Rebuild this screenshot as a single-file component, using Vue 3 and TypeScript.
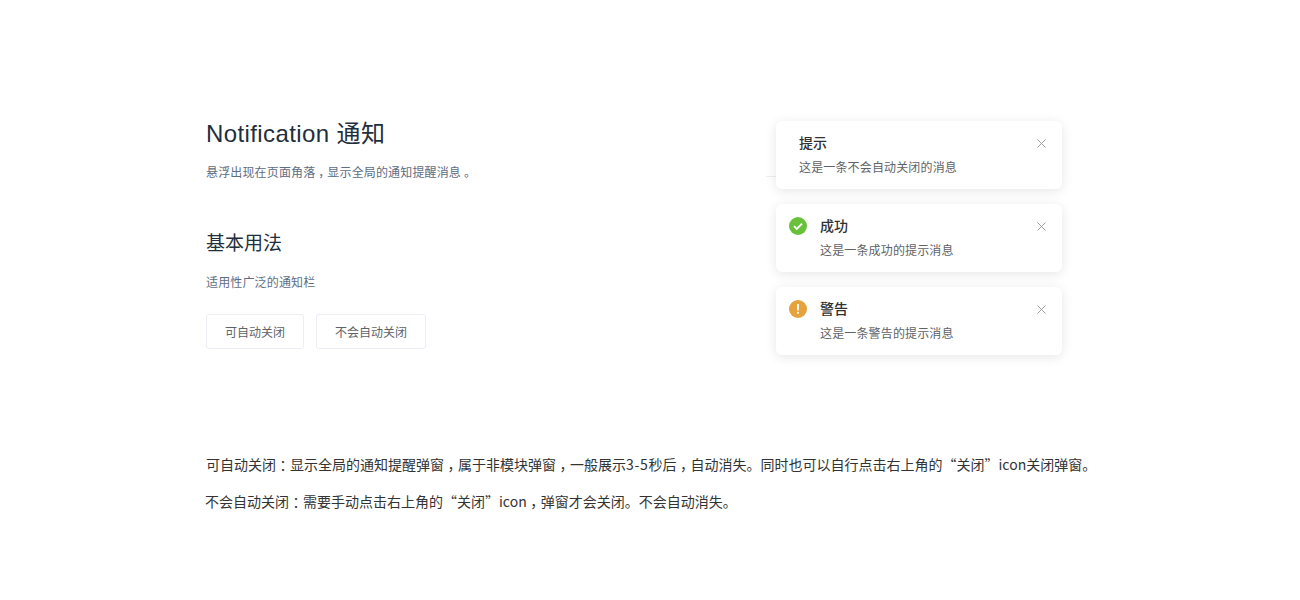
<script setup lang="ts">
interface Note { title: string; body: string; kind?: 'success' | 'warning' }
const notes: Note[] = [
  { title: '提示', body: '这是一条不会自动关闭的消息' },
  { title: '成功', body: '这是一条成功的提示消息', kind: 'success' },
  { title: '警告', body: '这是一条警告的提示消息', kind: 'warning' },
]
</script>

<template>
  <div class="page">
    <div class="top">
      <div class="left">
        <h1>Notification 通知</h1>
        <p class="desc">悬浮出现在页面角落<span class="p">，</span>显示全局的通知提醒消息<span class="p">。</span></p>
        <h2>基本用法</h2>
        <p class="sub">适用性广泛的通知栏</p>
        <div class="btns">
          <button class="btn">可自动关闭</button>
          <button class="btn">不会自动关闭</button>
        </div>
      </div>
      <div class="right">
        <span class="stub"></span>
        <div v-for="n in notes" :key="n.title" class="note">
          <svg v-if="n.kind === 'success'" class="icon" viewBox="0 0 18 18">
            <circle cx="9" cy="9" r="9" fill="#67c23a" />
            <path d="M5 9.2l2.8 2.7L13 6.6" fill="none" stroke="#fff" stroke-width="1.8" />
          </svg>
          <svg v-if="n.kind === 'warning'" class="icon" viewBox="0 0 18 18">
            <circle cx="9" cy="9" r="9" fill="#e6a23c" />
            <rect x="8.1" y="4" width="1.8" height="6.4" fill="#fff" />
            <rect x="8.1" y="11.8" width="1.8" height="1.9" fill="#fff" />
          </svg>
          <div class="text" :class="{ plain: !n.kind }">
            <div class="title">{{ n.title }}</div>
            <div class="body">{{ n.body }}</div>
          </div>
          <svg class="close" viewBox="0 0 10 10">
            <path d="M.5.5l9 9M9.5.5l-9 9" stroke="#909399" fill="none" />
          </svg>
        </div>
      </div>
    </div>
    <div class="notes">
      <p>可自动关闭<span class="p">：</span>显示全局的通知提醒弹窗<span class="p">，</span>属于非模块弹窗<span class="p">，</span>一般展示<span class="num">3-5</span>秒后<span class="p">，</span>自动消失。同时也可以自行点击右上角的“关闭”icon关闭弹窗。</p>
      <p class="second">不会自动关闭<span class="p">：</span>需要手动点击右上角的“关闭”icon<span class="p">，</span>弹窗才会关闭。不会自动消失。</p>
    </div>
  </div>
</template>

<style>
body { margin: 0; background: #fff; }
</style>

<style scoped>
.page {
  width: 1300px;
  height: 600px;
  overflow: hidden;
  box-sizing: border-box;
  padding: 118px 0 0 206px;
  font-family: "Noto Sans CJK SC", "Noto Sans", sans-serif;
}
.top { display: flex; }
.left { width: 570px; }
.p { display: inline-block; width: 1em; text-align: center; font-feature-settings: "halt"; }
.num { letter-spacing: .7px; }
h1 {
  margin: 0;
  font: 400 24px/32px "Liberation Sans", "Noto Sans CJK SC", sans-serif;
  letter-spacing: .4px;
  color: #1f2f3d;
}
.desc { margin: 13px 0 0; font-size: 12px; line-height: 18px; letter-spacing: .15px; color: #5e6d82; }
h2 {
  margin: 48px 0 0;
  font: 400 19px/26px "Noto Sans CJK SC", sans-serif;
  color: #1f2f3d;
}
.sub { margin: 18px 0 0; font-size: 12px; line-height: 18px; letter-spacing: .15px; color: #5e6d82; }
.btns { display: flex; gap: 12px; margin-top: 23px; }
.btn {
  height: 35px;
  padding: 0 18px;
  background: #fff;
  border: 1px solid #ebeef5;
  border-radius: 3px;
  font: 12px "Noto Sans CJK SC", sans-serif;
  color: #606266;
}
.right { position: relative; display: flex; flex-direction: column; gap: 15px; margin-top: 3px; }
.stub { position: absolute; left: -10px; top: 55px; width: 10px; height: 1px; background: #ebeef5; }
.note {
  position: relative;
  box-sizing: border-box;
  width: 286px;
  height: 68px;
  display: flex;
  padding: 13px 13px 0;
  background: #fff;
  border-radius: 6px;
  box-shadow: 0 2px 12px rgba(0, 0, 0, .1);
}
.icon { width: 18px; height: 18px; margin: 0 13px 0 0; flex: none; }
.text.plain { margin-left: 10px; }
.title { font-size: 14px; line-height: 17px; font-weight: 500; color: #303133; }
.body { margin-top: 7px; font-size: 12px; line-height: 17px; letter-spacing: .15px; color: #606266; }
.close { position: absolute; top: 18px; right: 16px; width: 9px; height: 9px; }
.notes { margin-top: 99px; font-size: 14px; line-height: 20px; color: #333; }
.notes p { margin: 0 0 17px; }
.notes .second { margin-left: -1px; }
</style>
